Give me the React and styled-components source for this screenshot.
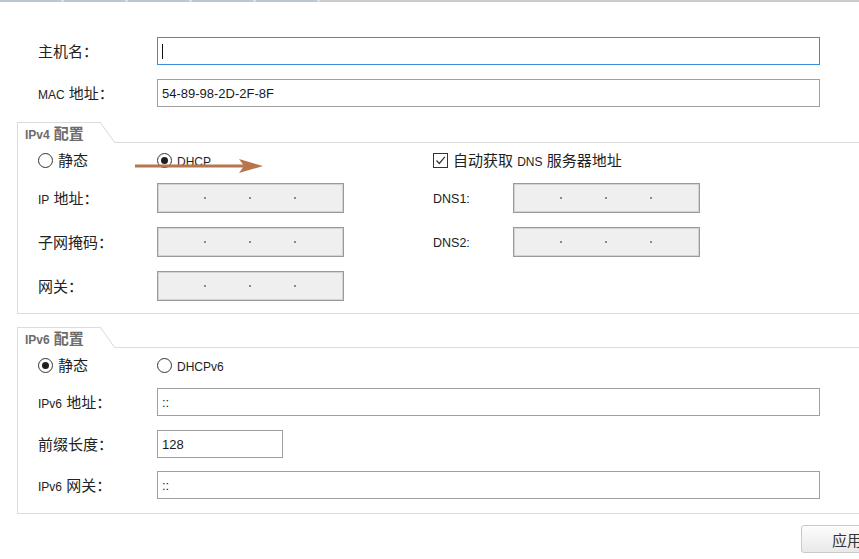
import React from "react";
import styled, { createGlobalStyle } from "styled-components";

const GlobalStyle = createGlobalStyle`
  html, body {
    margin: 0;
    background: #ffffff;
    overflow: hidden;
  }
  body {
    font-family: "Liberation Sans", "Noto Sans CJK SC", sans-serif;
    font-size: 15px;
    color: #222222;
  }
`;

const Page = styled.div`
  position: relative;
  width: 859px;
  height: 559px;
  overflow: hidden;
`;

const HeaderStrip = styled.div`
  display: flex;
  height: 2px;
  background: #cccccc;
`;

const HeaderCell = styled.div`
  width: 61px;
  background: #bcc5d1;
  border-right: 3px solid #d9dde3;
`;

const Form = styled.div`
  padding-top: 35px;
`;

const Row = styled.div`
  display: flex;
  align-items: center;
  height: ${({ $h }) => $h || 28}px;
  margin-bottom: ${({ $gap }) => ($gap === undefined ? 14 : $gap)}px;
  padding-left: ${({ $indent }) => $indent || 0}px;
`;

const Label = styled.div`
  width: ${({ $w }) => $w || 119}px;
  flex-shrink: 0;
  white-space: nowrap;
  line-height: 1;
`;

const Lat = styled.span`
  font-size: ${({ $size }) => $size || 12}px;
`;

const TextBox = styled.div`
  box-sizing: border-box;
  display: flex;
  align-items: center;
  width: ${({ $w }) => $w || 663}px;
  height: 100%;
  padding-left: 4px;
  border: 1px solid ${({ $focus }) => ($focus ? "#3c8ddb" : "#a0a0a0")};
  background: #ffffff;
  font-size: 13px;
  color: #1a1a1a;
`;

const Caret = styled.span`
  width: 1px;
  height: 15px;
  background: #111111;
`;

const IpBox = styled.div`
  box-sizing: border-box;
  display: flex;
  align-items: center;
  width: 187px;
  height: 100%;
  padding-left: 3px;
  border: 1px solid #9a9a9a;
  box-shadow: inset 0 0 0 1px #d4d4d4;
  background: #efefef;
`;

const IpSegment = styled.span`
  width: 43px;
`;

const IpDot = styled.span`
  width: 2px;
  height: 2px;
  background: #8a8a8a;
`;

const Group = styled.div`
  margin-left: 17px;
  margin-top: ${({ $top }) => $top}px;
  width: 900px;
  border-left: 1px solid #dcdcdc;
  border-bottom: 1px solid #dcdcdc;
  padding-bottom: ${({ $bottom }) => $bottom}px;
`;

const GroupHead = styled.div`
  display: flex;
  height: 21px;
`;

const Tab = styled.div`
  box-sizing: border-box;
  width: 82px;
  border-top: 1px solid #dcdcdc;
  padding: 2px 0 0 7px;
  font-weight: bold;
  color: #6c6c6c;
  line-height: 18px;
  white-space: nowrap;
`;

const Slant = styled.div`
  width: 15px;
  background: linear-gradient(
    to top right,
    transparent calc(50% - 0.8px),
    #d8d8d8 50%,
    transparent calc(50% + 0.8px)
  );
`;

const HeadRest = styled.div`
  flex: 1;
  border-bottom: 1px solid #dcdcdc;
`;

const GroupBody = styled.div`
  padding: 9px 0 0 20px;
`;

const Option = styled.div`
  display: flex;
  align-items: center;
  width: ${({ $w }) => $w}px;
  gap: 5px;
  white-space: nowrap;
`;

const RadioCircle = styled.span`
  box-sizing: border-box;
  display: flex;
  align-items: center;
  justify-content: center;
  width: 15px;
  height: 15px;
  border: 1px solid #333333;
  border-radius: 50%;
  background: #ffffff;
  &::after {
    content: "";
    width: 7px;
    height: 7px;
    border-radius: 50%;
    background: ${({ $on }) => ($on ? "#1e1e1e" : "transparent")};
  }
`;

const CheckSquare = styled.span`
  box-sizing: border-box;
  display: flex;
  align-items: center;
  justify-content: center;
  width: 15px;
  height: 15px;
  border: 1px solid #333333;
  background: #ffffff;
`;

const OptionText = styled.span`
  line-height: 1;
  color: #1e1e1e;
`;

const Spacer = styled.div`
  width: ${({ $w }) => $w}px;
  flex-shrink: 0;
`;

const Footer = styled.div`
  display: flex;
  padding: 11px 0 0 801px;
`;

const Button = styled.div`
  box-sizing: border-box;
  width: 72px;
  height: 28px;
  padding-left: 30px;
  display: flex;
  align-items: center;
  border: 1px solid #c9c9c9;
  border-radius: 3px;
  background: linear-gradient(#fdfdfd, #e9e9e9);
  color: #333333;
  white-space: nowrap;
`;

const Arrow = styled.svg`
  position: absolute;
  left: 135px;
  top: 157px;
`;

const IpField = () => (
  <IpBox>
    <IpSegment />
    <IpDot />
    <IpSegment />
    <IpDot />
    <IpSegment />
    <IpDot />
  </IpBox>
);

const Radio = ({ on, children, w }) => (
  <Option $w={w}>
    <RadioCircle $on={on} />
    <OptionText>{children}</OptionText>
  </Option>
);

const Check = ({ children }) => (
  <Option>
    <CheckSquare>
      <svg width="11" height="11" viewBox="0 0 11 11">
        <path d="M1.5 5.5 L4.3 8.5 L9.8 1.8" fill="none" stroke="#333" strokeWidth="1.2" />
      </svg>
    </CheckSquare>
    <OptionText>{children}</OptionText>
  </Option>
);

const GroupBox = ({ title, top, bottom, children }) => (
  <Group $top={top} $bottom={bottom}>
    <GroupHead>
      <Tab>{title}</Tab>
      <Slant />
      <HeadRest />
    </GroupHead>
    <GroupBody>{children}</GroupBody>
  </Group>
);

export default function App() {
  return (
    <Page>
      <GlobalStyle />
      <HeaderStrip>
        <HeaderCell />
        <HeaderCell />
        <HeaderCell />
        <HeaderCell />
        <HeaderCell />
      </HeaderStrip>
      <Form>
        <Row $indent={38}>
          <Label>主机名：</Label>
          <TextBox $focus>
            <Caret />
          </TextBox>
        </Row>
        <Row $indent={38} $gap={0}>
          <Label>
            <Lat>MAC</Lat> 地址：
          </Label>
          <TextBox>54-89-98-2D-2F-8F</TextBox>
        </Row>

        <GroupBox title={<><Lat>IPv4</Lat> 配置</>} top={15} bottom={12}>
          <Row $h={16} $gap={15}>
            <Radio w={119}>静态</Radio>
            <Radio w={276} on>
              <Lat>DHCP</Lat>
            </Radio>
            <Check>
              自动获取 <Lat>DNS</Lat> 服务器地址
            </Check>
          </Row>
          <Row $h={30}>
            <Label>
              <Lat>IP</Lat> 地址：
            </Label>
            <IpField />
            <Spacer $w={89} />
            <Label $w={80}>
              <Lat $size={12.5}>DNS1:</Lat>
            </Label>
            <IpField />
          </Row>
          <Row $h={30}>
            <Label>子网掩码：</Label>
            <IpField />
            <Spacer $w={89} />
            <Label $w={80}>
              <Lat $size={12.5}>DNS2:</Lat>
            </Label>
            <IpField />
          </Row>
          <Row $h={30} $gap={0}>
            <Label>网关：</Label>
            <IpField />
          </Row>
        </GroupBox>

        <GroupBox title={<><Lat>IPv6</Lat> 配置</>} top={13} bottom={14}>
          <Row $h={16} $gap={15}>
            <Radio w={119} on>
              静态
            </Radio>
            <Radio>
              <Lat>DHCPv6</Lat>
            </Radio>
          </Row>
          <Row>
            <Label>
              <Lat>IPv6</Lat> 地址：
            </Label>
            <TextBox>::</TextBox>
          </Row>
          <Row $gap={13}>
            <Label>前缀长度：</Label>
            <TextBox $w={126}>128</TextBox>
          </Row>
          <Row $gap={0}>
            <Label>
              <Lat>IPv6</Lat> 网关：
            </Label>
            <TextBox>::</TextBox>
          </Row>
        </GroupBox>

        <Footer>
          <Button>应用</Button>
        </Footer>
      </Form>

      <Arrow width="128" height="18" viewBox="0 0 128 18">
        <line x1="0" y1="9" x2="112" y2="9" stroke="#b7774e" strokeWidth="3" />
        <path d="M104 2 L128 9 L104 16 L109 9 Z" fill="#b7774e" />
      </Arrow>
    </Page>
  );
}
